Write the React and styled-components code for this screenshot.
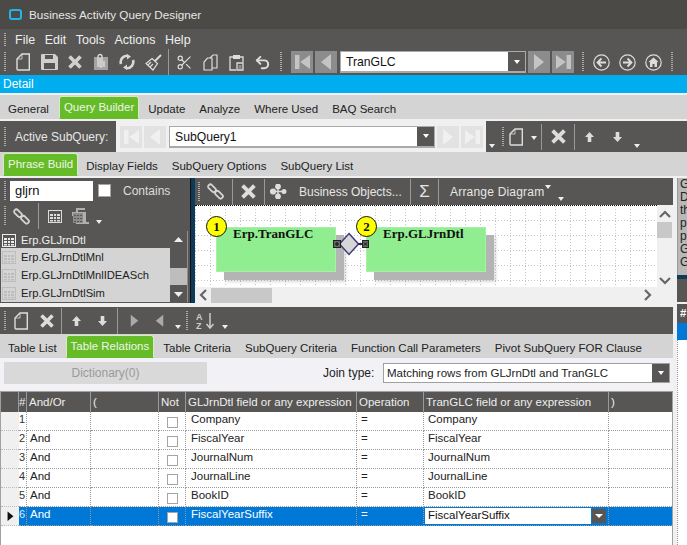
import React from 'react'
import styled, {createGlobalStyle} from 'styled-components'
import {Scissors, Undo2} from 'lucide-react'

const GlobalStyle = createGlobalStyle`
  html, body {
    margin: 0;
    padding: 0;
    background: #f0f0f0;
  }
  * {
    box-sizing: border-box;
  }
`

const DARK = '#575654'
const STRIP = '#d4d4d4'
const GREEN = '#66bb29'

const Page = styled.div`
  width: 687px;
  height: 545px;
  overflow: hidden;
  display: flex;
  flex-direction: column;
  background: #f0f0f0;
  font: 11.5px "Liberation Sans", Arial, sans-serif;
  color: #222;
`

const TitleBar = styled.div`
  height: 29px;
  flex: none;
  display: flex;
  align-items: center;
  gap: 7px;
  padding-left: 9px;
  font-size: 11.7px;
  background: #4b4a47;
  color: #e6e6e6;
`

const MenuBar = styled.div`
  height: 20px;
  flex: none;
  display: flex;
  align-items: center;
  padding: 2px 0 0 4px;
  font-size: 12.5px;
  background: ${DARK};
  color: #eee;
`

const Menu = styled.span`
  margin-left: ${p => p.$first ? 9 : 9.5}px;
`

const Toolbar = styled.div`
  height: ${p => p.$h || 26}px;
  flex: none;
  display: flex;
  align-items: center;
  margin-top: ${p => p.$mt || 0}px;
  padding-left: ${p => p.$pl ?? 4}px;
  background: ${DARK};
  color: #e6e6e6;
`

const Grip = styled.i`
  width: 2px;
  height: ${p => p.$h || 20}px;
  flex: none;
  margin: ${p => p.$m || '0'};
  background: repeating-linear-gradient(to bottom, #aaa 0 1px, transparent 1px 2px);
`

const Tool = styled.span`
  width: ${p => p.$w || 26}px;
  height: 22px;
  flex: none;
  display: flex;
  align-items: center;
  justify-content: center;
  margin: ${p => p.$m || '0'};
  color: ${p => p.$c || '#ddd'};
`

const SigmaTool = styled(Tool)`
  font-size: 17px;
  color: #e6e6e6;
`

const Sep = styled.i`
  width: 1px;
  height: ${p => p.$h || 26}px;
  flex: none;
  margin: ${p => p.$m || '0 2px'};
  background: #999;
`

const Caret = styled.i`
  flex: none;
  align-self: flex-end;
  margin: ${p => p.$m || '0 0 5px 0'};
  width: 0;
  height: 0;
  border-left: 3px solid transparent;
  border-right: 3px solid transparent;
  border-top: 4px solid #eee;
`

const NavButton = styled.span`
  width: 22px;
  height: 22px;
  flex: none;
  margin-right: 2px;
  display: flex;
  align-items: center;
  justify-content: center;
  background: ${p => p.$soft ? '#e2e2e2' : '#8c8c8c'};
  color: ${p => p.$soft ? '#f0f0f0' : '#c4c4c4'};
`

const Combo = styled.div`
  width: ${p => p.$w}px;
  height: 22px;
  flex: none;
  display: flex;
  margin: ${p => p.$m || '0'};
  border: 1px solid #aaa;
  border-bottom-width: 2px;
  background: #fff;
  color: #111;
`

const ComboText = styled.span`
  flex: 1;
  padding-left: 5px;
  line-height: 21px;
  font-size: 12.2px;
  white-space: nowrap;
`

const ComboButton = styled.span`
  width: 17px;
  flex: none;
  display: flex;
  align-items: center;
  justify-content: center;
  background: ${DARK};
  &::after {
    content: "";
    border-left: 3px solid transparent;
    border-right: 3px solid transparent;
    border-top: 4px solid #fff;
  }
`

const DetailBar = styled.div`
  height: 18px;
  flex: none;
  padding-left: 3px;
  line-height: 18px;
  font-size: 12px;
  background: #00adef;
  color: #fff;
`

const TabStrip = styled.div`
  height: 24px;
  flex: none;
  margin-top: ${p => p.$mt || 0}px;
  display: flex;
  align-items: stretch;
  padding-left: 1px;
  background: ${STRIP};
`

const Tab = styled.span`
  flex: none;
  display: flex;
  align-items: center;
  padding: ${p => p.$on ? '0 4px 2px' : '4px 7px 0'};
  margin: ${p => p.$on ? `1px ${p.$mr ?? 2}px 0 ${p.$ml ?? 3}px` : '0'};
  background: ${p => p.$on ? GREEN : 'transparent'};
  color: ${p => p.$on ? '#eef6e6' : '#222'};
  white-space: nowrap;
  border-radius: ${p => p.$on ? '3px 3px 0 0' : '0'};
  border: ${p => p.$on ? '1px solid #d5ebc0' : '0'};
  border-bottom: ${p => p.$on ? `1px solid ${GREEN}` : '0'};
`

const LightPanel = styled.div`
  width: 370px;
  height: 31px;
  flex: none;
  margin-left: 6px;
  padding-left: 4px;
  display: flex;
  align-items: center;
  background: #f0f0f0;
`

const Label = styled.span`
  flex: none;
  width: ${p => p.$w ? `${p.$w}px` : 'auto'};
  margin: ${p => p.$m || '0'};
  font-size: ${p => p.$size || 12}px;
  letter-spacing: ${p => p.$ls || 0}px;
  color: ${p => p.$c || 'inherit'};
  white-space: nowrap;
`

const Workspace = styled.div`
  flex: 1;
  min-height: 0;
  margin-top: 2px;
  display: flex;
`

const Main = styled.div`
  width: 673px;
  flex: none;
  display: flex;
  flex-direction: column;
`

const Upper = styled.div`
  height: 125px;
  flex: none;
  display: flex;
`

const LeftPane = styled.div`
  width: 190px;
  flex: none;
  display: flex;
  flex-direction: column;
  background: ${DARK};
`

const SearchInput = styled.span`
  width: 83px;
  height: 20px;
  margin-left: 4px;
  padding-left: 5px;
  flex: none;
  line-height: 20px;
  font-size: 13px;
  background: #fff;
  color: #111;
`

const CheckBox = styled.i`
  width: ${p => p.$s || 13}px;
  height: ${p => p.$s || 13}px;
  flex: none;
  display: block;
  margin: ${p => p.$m || '0'};
  background: #fff;
  border: 1px solid #a4a4a4;
`

const ListBox = styled.div`
  flex: 1;
  margin: 2px 2px 1px 1px;
  border-right: 1px solid #8f8f8f;
  display: grid;
  grid-template-columns: 169px 1fr;
  grid-template-rows: 17px 1fr;
`

const ListItem = styled.div`
  height: 18px;
  display: flex;
  align-items: center;
  gap: 5px;
  padding-left: 1px;
  font-size: 11.2px;
  white-space: nowrap;
  background: ${p => p.$on ? DARK : STRIP};
  color: ${p => p.$on ? '#eee' : '#222'};
`

const ListIcon = styled.span`
  display: flex;
  color: ${p => p.$on ? '#eee' : '#bdbdbd'};
`

const ListColumn = styled.div`
  grid-column: 1;
`

const ListScroll = styled.div`
  grid-column: 2;
  grid-row: 1 / 3;
  display: flex;
  flex-direction: column;
  align-items: center;
  justify-content: space-between;
  position: relative;
  padding: 6px 0 5px;
  color: #eee;
`

const ListThumb = styled.i`
  position: absolute;
  left: 0;
  right: 0;
  top: 37px;
  height: 17px;
  background: #bdbdbd;
`

const Splitter = styled.div`
  width: 5px;
  flex: none;
  background: #0c3a58;
  border-left: 1px solid #111;
`

const RightPane = styled.div`
  flex: 1;
  display: flex;
  flex-direction: column;
`

const CanvasRow = styled.div`
  height: 82px;
  flex: none;
  display: flex;
`

const Canvas = styled.div`
  width: 462px;
  flex: none;
  position: relative;
  overflow: hidden;
  border-top: 1px dotted #111;
  background: #fff;
`

const HLine = styled.i`
  position: absolute;
  left: 0;
  right: 0;
  top: ${p => p.$y}px;
  height: 1px;
  background: repeating-linear-gradient(to right, #c4c4c4 0 1px, #fff 1px 3px);
`

const VLine = styled.i`
  position: absolute;
  top: 0;
  bottom: 0;
  left: ${p => p.$x}px;
  width: 1px;
  background: repeating-linear-gradient(to bottom, #c4c4c4 0 1px, #fff 1px 3px);
`

const TableNode = styled.div`
  position: absolute;
  top: 21px;
  left: ${p => p.$x}px;
  width: 120px;
  height: 45px;
  padding-left: 16px;
  background: #90ee90;
  border: 1px solid #a8f0a8;
  box-shadow: 8px 8px 0 #b4b4b4, 10px 10px 3px rgba(120, 120, 120, .25);
  font: bold 13px/12px "Liberation Serif", "Times New Roman", serif;
  color: #111;
`

const Badge = styled.span`
  position: absolute;
  top: 10px;
  left: ${p => p.$x}px;
  width: 21px;
  height: 21px;
  display: flex;
  align-items: center;
  justify-content: center;
  border-radius: 50%;
  background: #ffff00;
  border: 1px solid #111;
  font: bold 13px "Liberation Serif", "Times New Roman", serif;
  color: #111;
`

const Joint = styled.svg`
  position: absolute;
  left: 138px;
  top: 26px;
`

const VScroll = styled.div`
  flex: 1;
  position: relative;
  display: flex;
  flex-direction: column;
  align-items: center;
  justify-content: space-between;
  padding: 5px 0 2px;
  color: #666;
`

const VThumb = styled.i`
  position: absolute;
  top: 17px;
  left: 0;
  right: 1px;
  height: 16px;
  background: #c8c8c8;
`

const HScroll = styled.div`
  height: 16px;
  flex: none;
  display: flex;
  align-items: center;
  padding: 0 21px 0 4px;
  color: #666;
`

const HThumb = styled.i`
  width: 61px;
  height: 15px;
  flex: none;
  margin: 0 auto 0 4px;
  background: #c8c8c8;
`

const Side = styled.div`
  flex: 1;
  margin-left: 4px;
  display: flex;
  flex-direction: column;
  overflow: hidden;
`

const SideText = styled.div`
  height: 97px;
  flex: none;
  padding-left: 2px;
  overflow: hidden;
  background: #b8b8b8;
  border-left: 1px solid #999;
  font-size: 12px;
  line-height: 13px;
  white-space: nowrap;
  color: #222;
`

const SideSplit = styled.div`
  height: 4px;
  flex: none;
  background: #0c3a58;
`

const SideTools = styled.div`
  height: 23px;
  flex: none;
  padding: 2px 0 0 2px;
  background: ${DARK};
`

const SideHead = styled.div`
  height: 19px;
  flex: none;
  margin-top: 2px;
  padding-left: 3px;
  line-height: 19px;
  font-weight: bold;
  background: ${DARK};
  color: #fff;
`

const SideCell = styled.div`
  height: 17px;
  flex: none;
  background: #0078d7;
`

const SideRest = styled.div`
  flex: 1;
  background: #fff;
  border-left: 1px dotted #999;
`

const LowerBody = styled.div`
  flex: 1;
  min-height: 0;
  display: flex;
  flex-direction: column;
  background: #f2f2f6;
`

const JoinRow = styled.div`
  height: 33px;
  flex: none;
  display: flex;
  align-items: center;
  padding: 1px 0 5px 4px;
`

const DictButton = styled.span`
  width: 203px;
  height: 22px;
  flex: none;
  line-height: 22px;
  font-size: 12px;
  text-align: center;
  background: #d9d9d9;
  color: #999;
`

const JoinSelect = styled.div`
  width: 287px;
  height: 20px;
  flex: none;
  margin-left: 8px;
  display: flex;
  border: 1px solid #a0a0a0;
  background: #fff;
  color: #222;
`

const JoinText = styled.span`
  flex: 1;
  padding-left: 3px;
  line-height: 18px;
  white-space: nowrap;
`

const GridWrap = styled.div`
  flex: 1;
  border: 1px solid #a0a0a0;
  border-width: 1px 1px 0 1px;
  background: #fff;
`

const COLUMNS = '18px 8px 64px 68px 27px 171px 67px 185px 1fr'

const GridRow = styled.div`
  display: grid;
  grid-template-columns: ${COLUMNS};
  height: ${p => p.$head ? 20 : 19}px;
  background: ${p => p.$head ? DARK : p.$on ? '#0078d7' : '#fff'};
  color: ${p => p.$head ? '#eee' : p.$on ? '#fff' : '#222'};
`

const HeadCell = styled.span`
  padding-left: ${p => p.$pl ?? 2}px;
  line-height: 20px;
  white-space: nowrap;
  border-right: 1px solid #9a9a9a;
  &:last-child {
    border-right: 0;
  }
`

const Cell = styled.span`
  display: flex;
  position: relative;
  padding-left: ${p => p.$pl ?? 3}px;
  line-height: 15px;
  white-space: nowrap;
  border-right: 1px dotted #999;
  border-bottom: 1px dotted #999;
  justify-content: ${p => p.$center ? 'center' : 'flex-start'};
  align-items: flex-start;
  &:last-child {
    border-right: 0;
  }
`

const RowHead = styled.span`
  display: flex;
  align-items: center;
  justify-content: flex-end;
  padding-right: 5px;
  background: #f0f0f0;
  border-bottom: 1px dotted #bbb;
  color: #111;
`

const Num = styled.span`
  font-size: 11px;
  line-height: 14px;
  border-right: 1px dotted #999;
  border-bottom: 1px dotted #999;
  overflow: hidden;
  color: ${p => p.$on ? '#dfe9f5' : '#333'};
`

const Editor = styled.span`
  position: absolute;
  inset: 0;
  display: flex;
  align-items: stretch;
  padding-left: 3px;
  line-height: 15px;
  background: #fff;
  border: 1px solid #0078d7;
  color: #111;
`

const EditorButton = styled.span`
  width: 16px;
  margin-left: auto;
  display: flex;
  align-items: center;
  justify-content: center;
  background: ${DARK};
  border: 1px solid #0078d7;
  &::after {
    content: "";
    border-left: 4px solid transparent;
    border-right: 4px solid transparent;
    border-top: 4px solid #fff;
  }
`

// toolbar drawings, all on currentColor
const NewDoc = () => (
  <svg width="15" height="18" viewBox="0 0 15 18" fill="none" stroke="currentColor" strokeWidth="1.4">
    <path d="M6 1h7.3v16H2a1 1 0 0 1-1-1V6z"/>
    <path d="M6 1v5H1" strokeWidth=".8"/>
  </svg>
)

const SaveIcon = () => (
  <svg width="17" height="16" viewBox="0 0 17 16">
    <path fill="#cfcfcf" fillRule="evenodd" d="M1 0h13l3 3v12a1 1 0 0 1-1 1H1a1 1 0 0 1-1-1V1a1 1 0 0 1 1-1zM4 1v4h8V1zM3 9v6h11V9z"/>
  </svg>
)

const CrossIcon = ({size = 14}) => (
  <svg width={size} height={size} viewBox="0 0 14 14" stroke="currentColor" strokeWidth="3.6">
    <path d="M1.5 1.5l11 11M12.5 1.5l-11 11"/>
  </svg>
)

const ClipDoc = () => (
  <svg width="16" height="18" viewBox="0 0 16 18">
    <path fill="#a3a3a3" d="M1 4h14v13H1z"/>
    <path fill="none" stroke="#e0e0e0" strokeWidth="1.3" d="M5 14V3.500a2 2 0 0 1 4 0V13a1 1 0 0 1-2 0V5M11 8v6"/>
  </svg>
)

const RefreshIcon = () => (
  <svg width="16" height="16" viewBox="0 0 16 16" fill="none" stroke="#d8d8d8" strokeWidth="2.6">
    <path d="M2 10a6.3 6.300 0 0 1 6.500-8.200"/>
    <path d="M14 6a6.3 6.300 0 0 1-6.500 8.200"/>
    <path fill="#d8d8d8" stroke="none" d="M8 0l4 2.500-4 3zM8 16l-4-2.500 4-3z"/>
  </svg>
)

const BroomIcon = () => (
  <svg width="17" height="17" viewBox="0 0 17 17" fill="none" stroke="#ddd" strokeWidth="1.2">
    <path d="M10 7l6-6" strokeWidth="1.8"/>
    <path d="M7 4.500l5.500 5L8 16 1 9.500z"/>
    <path d="M5 13l3-3M3 11l3-3"/>
  </svg>
)

const CopyIcon = () => (
  <svg width="15" height="17" viewBox="0 0 15 17" fill="none" stroke="#ddd" strokeWidth="1.2">
    <path d="M7 4l3-3h4v13H9"/>
    <path d="M4.500 4H9v12H1V8z"/>
  </svg>
)

const PasteIcon = () => (
  <svg width="15" height="17" viewBox="0 0 15 17" fill="none" stroke="#ddd" strokeWidth="1.3">
    <path d="M4 3H1v13h6M11 3h3v5"/>
    <path fill="#ddd" stroke="none" d="M4 1h7v4H4z"/>
    <path d="M8 9h6v7H8z" fill="#575654"/>
    <path d="M9.500 12h3M9.500 14h3" strokeWidth=".8"/>
  </svg>
)

const LinkIcon = () => (
  <svg width="17" height="17" viewBox="0 0 17 17" fill="none" stroke="#d4d4d4" strokeWidth="1.8">
    <rect x=".5" y="3" width="9" height="4.500" rx="2.200" transform="rotate(45 5 5.200)"/>
    <rect x="7.500" y="9.500" width="9" height="4.500" rx="2.200" transform="rotate(45 12 11.800)"/>
  </svg>
)

const TableIcon = () => (
  <svg width="14" height="13" viewBox="0 0 14 13" fill="none" stroke="currentColor">
    <rect x=".5" y=".5" width="13" height="12"/>
    <path fill="currentColor" stroke="none" d="M2 4h3v2H2zM6 4h2v2H6zM9 4h3v2H9zM2 7h3v2H2zM6 7h2v2H6zM9 7h3v2H9zM2 10h3v1.500H2zM6 10h2v1.500H6zM9 10h3v1.500H9z"/>
  </svg>
)

const CalcDoc = () => (
  <svg width="17" height="16" viewBox="0 0 17 16">
    <path fill="#b0b0b0" d="M4 0h9v2H6v2h8v10h3v2H4V8H0V4h4z"/>
    <path fill="#8c8c8c" d="M1 5h10v10H1z"/>
    <path fill="#575654" d="M2 7h2v1H2zM5 7h2v1H5zM8 7h2v1H8zM2 10h2v1H2zM5 10h2v1H5zM8 10h2v1H8zM2 13h2v1H2zM5 13h2v1H5zM8 13h2v1H8z"/>
  </svg>
)

const Arrow = ({dir}) => (
  <svg width="11" height="12" viewBox="0 0 11 12" fill="currentColor">
    {dir === 'up'
      ? <path d="M5.500 1L10 6H7.300v5H3.700V6H1z"/>
      : <path d="M5.500 11L10 6H7.300V1H3.700v5H1z"/>}
  </svg>
)

const Nodes = () => (
  <svg width="17" height="15" viewBox="0 0 17 15" fill="#ddd" stroke="#ddd" strokeWidth="1.4">
    <path d="M3 7.500h13M8 2.500v10" fill="none"/>
    <circle cx="3" cy="7.500" r="2.400"/>
    <circle cx="8" cy="2.500" r="2.200"/>
    <circle cx="8" cy="12.500" r="2.200"/>
    <circle cx="14" cy="7.500" r="1.800"/>
  </svg>
)

const Triangle = ({dir, size = 12}) => (
  <svg width={size} height={size * 1.5} viewBox="0 0 12 18" fill="currentColor">
    {dir === 'right' ? <path d="M1 1l10 8-10 8z"/> : <path d="M11 1L1 9l10 8z"/>}
  </svg>
)

const FirstLast = ({last}) => (
  <svg width="15" height="16" viewBox="0 0 17 18" fill="currentColor">
    {last
      ? <path d="M0 1l11 8-11 8zM12 1h5v16h-5z"/>
      : <path d="M17 1L6 9l11 8zM0 1h5v16H0z"/>}
  </svg>
)

const CircleNav = ({kind}) => (
  <svg width="17" height="17" viewBox="0 0 17 17" fill="none" stroke="#ddd" strokeWidth="1.2">
    <circle cx="8.500" cy="8.500" r="7.700"/>
    {kind === 'back' && <path d="M13 8.500H5M8.500 4.500l-4 4 4 4" strokeWidth="1.8"/>}
    {kind === 'next' && <path d="M4 8.500h8M8.500 4.500l4 4-4 4" strokeWidth="1.8"/>}
    {kind === 'home' && <path fill="#ddd" stroke="none" d="M8.500 3.500l5 4.500h-1.500v5H9.500v-3h-2v3H5V8H3.500z"/>}
  </svg>
)

const Chevron = ({dir}) => {
  const d = {
    up: 'M1 7l5-5 5 5',
    down: 'M1 1l5 5 5-5',
    left: 'M7 1L2 6l5 5',
    right: 'M1 1l5 5-5 5',
  }[dir]
  const vertical = dir === 'up' || dir === 'down'
  return (
    <svg width={vertical ? 12 : 8} height={vertical ? 8 : 12} viewBox={vertical ? '0 0 12 8' : '0 0 8 12'}
         fill="none" stroke="currentColor" strokeWidth="2.2">
      <path d={d}/>
    </svg>
  )
}

const SmallTri = ({up}) => (
  <svg width="9" height="5" viewBox="0 0 9 5" fill="currentColor">
    <path d={up ? 'M0 5l4.500-5L9 5z' : 'M0 0l4.500 5L9 0z'}/>
  </svg>
)

const SortIcon = () => (
  <svg width="19" height="18" viewBox="0 0 19 18" fill="none" stroke="#ccc" strokeWidth="1.5">
    <path d="M14 1v15M10.500 12l3.500 4 3.500-4"/>
    <text x="0" y="8" fill="#ccc" stroke="none" fontSize="9" fontWeight="bold" fontFamily="Liberation Sans">A</text>
    <text x="0" y="17" fill="#ccc" stroke="none" fontSize="9" fontWeight="bold" fontFamily="Liberation Sans">Z</text>
  </svg>
)

const rows = [
  ['1', '', 'Company', 'Company'],
  ['2', 'And', 'FiscalYear', 'FiscalYear'],
  ['3', 'And', 'JournalNum', 'JournalNum'],
  ['4', 'And', 'JournalLine', 'JournalLine'],
  ['5', 'And', 'BookID', 'BookID'],
  ['6', 'And', 'FiscalYearSuffix', 'FiscalYearSuffix'],
]

const listItems = ['Erp.GLJrnDtlMnl', 'Erp.GLJrnDtlMnlIDEASch', 'Erp.GLJrnDtlSim']

const gridX = Array.from({length: 31}, (_, i) => i * 15)
const gridY = [14, 29, 44, 59, 74]

const App = () => (
  <Page>
    <GlobalStyle/>
    <TitleBar>
      <svg width="13" height="11" viewBox="0 0 13 11" fill="none" stroke="#22b4ea" strokeWidth="2">
        <rect x="1" y="1" width="11" height="9" rx="2"/>
      </svg>
      Business Activity Query Designer
    </TitleBar>
    <MenuBar>
      <Grip $h={14}/>
      <Menu $first>File</Menu>
      <Menu>Edit</Menu>
      <Menu>Tools</Menu>
      <Menu>Actions</Menu>
      <Menu>Help</Menu>
    </MenuBar>
    <Toolbar>
      <Grip $m="0 4px 0 0"/>
      <Tool><NewDoc/></Tool>
      <Tool><SaveIcon/></Tool>
      <Tool $c="#d0d0d0"><CrossIcon/></Tool>
      <Tool><ClipDoc/></Tool>
      <Tool><RefreshIcon/></Tool>
      <Tool><BroomIcon/></Tool>
      <Sep $m="0 2px"/>
      <Tool><Scissors size={17} strokeWidth={1.6}/></Tool>
      <Tool><CopyIcon/></Tool>
      <Tool><PasteIcon/></Tool>
      <Tool><Undo2 size={17} strokeWidth={2.8}/></Tool>
      <Grip $m="0 9px 0 5px"/>
      <NavButton><FirstLast/></NavButton>
      <NavButton><Triangle dir="left"/></NavButton>
      <Combo $w={186} $m="0 2px 0 1px">
        <ComboText>TranGLC</ComboText>
        <ComboButton/>
      </Combo>
      <NavButton><Triangle dir="right"/></NavButton>
      <NavButton><FirstLast last/></NavButton>
      <Grip $m="0 4px 0 6px"/>
      <Tool><CircleNav kind="back"/></Tool>
      <Tool><CircleNav kind="next"/></Tool>
      <Tool><CircleNav kind="home"/></Tool>
      <Grip $m="0 0 0 5px"/>
    </Toolbar>
    <DetailBar>Detail</DetailBar>
    <TabStrip $mt={2}>
      <Tab>General</Tab>
      <Tab $on>Query Builder</Tab>
      <Tab>Update</Tab>
      <Tab>Analyze</Tab>
      <Tab>Where Used</Tab>
      <Tab>BAQ Search</Tab>
    </TabStrip>
    <Toolbar $h={31} $mt={2}>
      <Grip/>
      <Label $m="0 0 0 9px" $w={95}>Active SubQuery:</Label>
      <LightPanel>
        <NavButton $soft><FirstLast/></NavButton>
        <NavButton $soft><Triangle dir="left"/></NavButton>
        <Combo $w={266} $m="0 2px 0 1px">
          <ComboText>SubQuery1</ComboText>
          <ComboButton/>
        </Combo>
        <NavButton $soft><Triangle dir="right"/></NavButton>
        <NavButton $soft><FirstLast last/></NavButton>
      </LightPanel>
      <Caret $m="0 0 4px 3px"/>
      <Grip $m="0 0 0 7px"/>
      <Tool $w={22} $m="0 0 0 1px"><NewDoc/></Tool>
      <Caret $m="0 0 12px 4px"/>
      <Sep $m="0 0 0 4px"/>
      <Tool $w={32}><CrossIcon size={15}/></Tool>
      <Sep $m="0"/>
      <Tool $w={29}><Arrow dir="up"/></Tool>
      <Tool $w={26}><Arrow dir="down"/></Tool>
      <Caret $m="0 0 4px 4px"/>
    </Toolbar>
    <TabStrip>
      <Tab $on $ml={2} $mr={1}>Phrase Build</Tab>
      <Tab>Display Fields</Tab>
      <Tab>SubQuery Options</Tab>
      <Tab>SubQuery List</Tab>
    </TabStrip>
    <Workspace>
      <Main>
        <Upper>
          <LeftPane>
            <Toolbar $h={25}>
              <Grip/>
              <SearchInput>gljrn</SearchInput>
              <CheckBox $m="0 0 0 5px"/>
              <Label $m="0 0 0 12px" $c="#ddd">Contains</Label>
            </Toolbar>
            <Toolbar $h={26}>
              <Grip/>
              <Tool $w={30}><LinkIcon/></Tool>
              <Sep $m="0 0 0 2px"/>
              <Tool $w={32}><TableIcon/></Tool>
              <Tool $w={18}><CalcDoc/></Tool>
              <Caret $m="0 0 5px 7px"/>
            </Toolbar>
            <ListBox>
              <ListItem $on>
                <ListIcon $on><TableIcon/></ListIcon>Erp.GLJrnDtl
              </ListItem>
              <ListColumn>
                {listItems.map(name => (
                  <ListItem key={name}>
                    <ListIcon><TableIcon/></ListIcon>{name}
                  </ListItem>
                ))}
              </ListColumn>
              <ListScroll>
                <SmallTri up/>
                <ListThumb/>
                <SmallTri/>
              </ListScroll>
            </ListBox>
          </LeftPane>
          <Splitter/>
          <RightPane>
            <Toolbar $h={27} $pl={3}>
              <Grip/>
              <Tool $w={30}><LinkIcon/></Tool>
              <Sep $m="0 0 0 2px"/>
              <Tool $w={31}><CrossIcon size={15}/></Tool>
              <Sep $m="0"/>
              <Tool $w={26}><Nodes/></Tool>
              <Label $m="0 0 0 8px" $w={103}>Business Objects...</Label>
              <Sep $m="0 0 0 8px"/>
              <SigmaTool $w={27}>Σ</SigmaTool>
              <Sep $m="0"/>
              <Label $m="0 0 0 11px" $ls={.2}>Arrange Diagram</Label>
              <Caret $m="0 0 16px 1px"/>
              <Caret $m="0 0 4px 7px"/>
            </Toolbar>
            <CanvasRow>
              <Canvas>
                {gridX.map(x => <VLine key={x} $x={x}/>)}
                {gridY.map(y => <HLine key={y} $y={y}/>)}
                <TableNode $x={21}>Erp.TranGLC</TableNode>
                <TableNode $x={171}>Erp.GLJrnDtl</TableNode>
                <Badge $x={11}>1</Badge>
                <Badge $x={161}>2</Badge>
                <Joint width="36" height="24" viewBox="0 0 36 24">
                  <path d="M16 1.500l9.500 10.500-9.500 10.500L6.500 12z" fill="#d6d6d6" stroke="#3c3c7c" strokeWidth="1.5"/>
                  <path d="M25 12h5" stroke="#23236e" strokeWidth="2"/>
                  <rect x=".5" y="8.500" width="7" height="7" fill="#666" stroke="#222"/>
                  <path d="M2 12h4M4 10v4" stroke="#111"/>
                  <rect x="29.500" y="8.500" width="6" height="7" fill="#666" stroke="#222"/>
                  <path d="M31 10.500l3 3M34 10.500l-3 3" stroke="#111"/>
                </Joint>
              </Canvas>
              <VScroll>
                <Chevron dir="up"/>
                <VThumb/>
                <Chevron dir="down"/>
              </VScroll>
            </CanvasRow>
            <HScroll>
              <Chevron dir="left"/>
              <HThumb/>
              <Chevron dir="right"/>
            </HScroll>
          </RightPane>
        </Upper>
        <Toolbar $h={27} $mt={4}>
          <Grip/>
          <Tool $w={30}><NewDoc/></Tool>
          <Tool $w={22}><CrossIcon/></Tool>
          <Sep $m="0 0 0 3px"/>
          <Tool $w={29}><Arrow dir="up"/></Tool>
          <Tool $w={23}><Arrow dir="down"/></Tool>
          <Sep $m="0 0 0 3px"/>
          <Tool $w={32} $c="#aaa"><Triangle dir="right" size={9}/></Tool>
          <Tool $w={18} $c="#aaa"><Triangle dir="left" size={9}/></Tool>
          <Caret $m="0 0 5px 7px"/>
          <Grip $m="0 0 0 5px"/>
          <Tool $w={34}><SortIcon/></Tool>
          <Caret $m="0 0 5px 0"/>
        </Toolbar>
        <TabStrip>
          <Tab>Table List</Tab>
          <Tab $on $ml={2} $mr={2}>Table Relations</Tab>
          <Tab>Table Criteria</Tab>
          <Tab>SubQuery Criteria</Tab>
          <Tab>Function Call Parameters</Tab>
          <Tab>Pivot SubQuery FOR Clause</Tab>
        </TabStrip>
        <LowerBody>
          <JoinRow>
            <DictButton>Dictionary(0)</DictButton>
            <Label $m="0 0 0 116px" $w={52}>Join type:</Label>
            <JoinSelect>
              <JoinText>Matching rows from GLJrnDtl and TranGLC</JoinText>
              <ComboButton/>
            </JoinSelect>
          </JoinRow>
          <GridWrap>
            <GridRow $head>
              <HeadCell/>
              <HeadCell $pl={0}>#</HeadCell>
              <HeadCell>And/Or</HeadCell>
              <HeadCell>(</HeadCell>
              <HeadCell>Not</HeadCell>
              <HeadCell>GLJrnDtl field or any expression</HeadCell>
              <HeadCell>Operation</HeadCell>
              <HeadCell>TranGLC field or any expression</HeadCell>
              <HeadCell>)</HeadCell>
            </GridRow>
            {rows.map(([n, op, left, right], i) => {
              const on = i === rows.length - 1
              return (
                <GridRow key={n} $on={on}>
                  <RowHead>{on && <Triangle dir="right" size={7}/>}</RowHead>
                  <Num $on={on}>{n}</Num>
                  <Cell>{op}</Cell>
                  <Cell/>
                  <Cell $center $pl={0}>
                    <CheckBox $s={11} $m="5px 0 0 0"/>
                  </Cell>
                  <Cell $pl={5}>{left}</Cell>
                  <Cell $pl={4}>=</Cell>
                  <Cell $pl={4}>
                    {on
                      ? <Editor>{right}<EditorButton/></Editor>
                      : right}
                  </Cell>
                  <Cell/>
                </GridRow>
              )
            })}
          </GridWrap>
        </LowerBody>
      </Main>
      <Side>
        <SideText>
          G<br/>D<br/>th<br/>p<br/>p<br/>G<br/>G
        </SideText>
        <SideSplit/>
        <SideTools><Grip/></SideTools>
        <SideHead>#</SideHead>
        <SideCell/>
        <SideRest/>
      </Side>
    </Workspace>
  </Page>
)

export default App
